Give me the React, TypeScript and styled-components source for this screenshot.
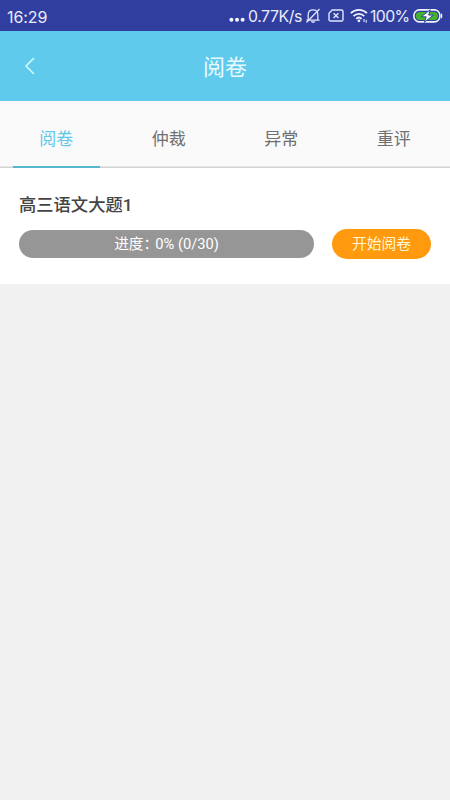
import React from "react";
import styled, { createGlobalStyle } from "styled-components";

const GlobalStyle = createGlobalStyle`
  * { box-sizing: border-box; }
  body { margin: 0; background: #f1f1f1; }
`;

const Screen = styled.div`
  display: flex;
  flex-direction: column;
  width: 100%;
  max-width: 450px;
  height: 800px;
  background: #f1f1f1;
  font-family: Roboto, "Noto Sans CJK SC", sans-serif;
`;

const StatusBar = styled.div`
  display: flex;
  align-items: center;
  height: 31px;
  padding: 2px 7px 0;
  background: #303f9f;
  color: #e9ecfb;
  font: 400 15.8px/24px Inter, sans-serif;
`;

const Clock = styled.span`
  flex: 1;
  font-size: 16px;
  letter-spacing: -0.1px;
`;

const StatusText = styled.span<{ $width: number; $spacing: number }>`
  width: ${(p) => p.$width}px;
  white-space: nowrap;
  letter-spacing: ${(p) => p.$spacing}px;
`;

const StatusIcon = styled.svg<{ $gap?: number }>`
  flex: none;
  display: block;
  margin-right: ${(p) => p.$gap ?? 0}px;
  margin-bottom: 2px;
`;

const Header = styled.header`
  display: grid;
  grid-template-columns: 60px 1fr 60px;
  align-items: center;
  height: 70px;
  background: #60caed;
  color: #e9faff;
`;

const BackButton = styled.button`
  display: flex;
  justify-content: center;
  padding: 0;
  border: 0;
  background: none;
  color: #d3fbff;
`;

const Title = styled.h1`
  margin: 0;
  padding-top: 4px;
  font-size: 22px;
  line-height: 32px;
  font-weight: 400;
  text-align: center;
`;

const Tabs = styled.nav`
  display: grid;
  grid-template-columns: repeat(4, 1fr);
  height: 67px;
  padding-top: 1px;
  background: #fafafa;
  box-shadow: inset 0 -1px #d3d3d3, inset 0 -2px #e5e5e5;
`;

const Tab = styled.button<{ $active?: boolean }>`
  margin: 0 12.5px;
  padding: 9px 0 0;
  border: 0;
  border-bottom: 2px solid ${(p) => (p.$active ? "#55b6cc" : "transparent")};
  background: none;
  color: ${(p) => (p.$active ? "#62c8ea" : "#707070")};
  font: inherit;
  font-size: 17px;
  line-height: 26px;
`;

const Task = styled.section`
  height: 116px;
  padding: 24px 19px 0 19px;
  background: #fff;
`;

const TaskTitle = styled.h2`
  margin: 0;
  color: #444;
  font-size: 17.3px;
  line-height: 26px;
  font-weight: 500;
`;

const TaskRow = styled.div`
  display: flex;
  align-items: center;
  justify-content: space-between;
  margin-top: 11px;
`;

const Progress = styled.div`
  width: 295px;
  height: 28px;
  border-radius: 14px;
  background: #969696;
  color: #fff;
  font-size: 14.7px;
  line-height: 29px;
  text-align: center;
`;

const Colon = styled.span`
  letter-spacing: -3px;
`;

const StartButton = styled.button`
  width: 99px;
  height: 30px;
  padding: 1px 0 0;
  border: 0;
  border-radius: 15px;
  background: #ff9a0e;
  color: #fff4d6;
  font: inherit;
  font-size: 14.8px;
  line-height: 29px;
`;

const tabs = ["阅卷", "仲裁", "异常", "重评"];

export default function App() {
  return (
    <>
      <GlobalStyle />
      <Screen>
        <StatusBar>
          <Clock>16:29</Clock>
          <StatusIcon width="16" height="12" viewBox="0 0 16 12" fill="#f4f6ff" $gap={3}>
            <circle cx="2.4" cy="9.8" r="2" />
            <circle cx="8" cy="9.8" r="2" />
            <circle cx="13.6" cy="9.8" r="2" />
          </StatusIcon>
          <StatusText $width={57} $spacing={-0.4}>0.77K/s</StatusText>
          <StatusIcon width="16" height="16" viewBox="0 0 16 16" fill="none" stroke="#e1e5f8" strokeWidth="1.3" $gap={7}>
            <path d="M1.5 12.2h13M3.2 12V6.5C3.2 3.6 5 1.8 8 1.8s4.8 1.8 4.8 4.7V12M1.5 14.5 14.5 1" />
            <path d="M5.8 13h4.6c-.3 1.4-1.1 2-2.3 2s-2-.6-2.3-2z" fill="#b5bbea" stroke="none" />
          </StatusIcon>
          <StatusIcon width="16" height="13" viewBox="0 0 16 13" fill="none" stroke="#e1e5f8" strokeWidth="1.4" $gap={6}>
            <path d="M4.2 1h9.2c1 0 1.6.6 1.6 1.6v7.8c0 1-.6 1.6-1.6 1.6H2.6C1.6 12 1 11.4 1 10.4V4.2z" />
            <path d="m5.6 4.2 4.8 4.8m0-4.8L5.6 9" />
          </StatusIcon>
          <StatusIcon width="19" height="15" viewBox="0 0 19 15" fill="none" stroke="#f1f3ff" strokeWidth="1.8" $gap={1}>
            <path d="M.8 5.2c4.6-4.5 11.6-4.5 16.2 0M3.5 8.1c3.1-3 7.7-3 10.8 0M6.2 10.8c1.6-1.5 3.8-1.5 5.4 0" />
            <circle cx="8.9" cy="12.8" r="1.4" fill="#f1f3ff" stroke="none" />
            <path d="M14 11v3M16.2 11.8v3" strokeWidth="1" />
          </StatusIcon>
          <StatusText $width={43} $spacing={-0.6}>100%</StatusText>
          <StatusIcon width="30" height="14" viewBox="0 0 30 14">
            <rect x=".9" y=".9" width="26" height="12" rx="5.5" fill="#303f9f" stroke="#f1f3ff" strokeWidth="1.6" />
            <rect x="2.9" y="2.9" width="22" height="8" rx="3.6" fill="#43b32d" />
            <path d="M28 4.2c1.8.7 1.8 4.7 0 5.4z" fill="#f1f3ff" />
            <path d="m17.2.8-9 7h5L11.4 13.3l9-7.2H15.7z" fill="#fff" stroke="#34469b" strokeWidth="1" />
          </StatusIcon>
        </StatusBar>
        <Header>
          <BackButton aria-label="返回">
            <svg width="12" height="18" viewBox="0 0 12 18" fill="none" stroke="currentColor" strokeWidth="1.5">
              <path d="M10 1 2 9l8 8" />
            </svg>
          </BackButton>
          <Title>阅卷</Title>
        </Header>
        <Tabs>
          {tabs.map((label, i) => (
            <Tab key={label} $active={i === 0}>{label}</Tab>
          ))}
        </Tabs>
        <Task>
          <TaskTitle>高三语文大题1</TaskTitle>
          <TaskRow>
            <Progress>进度<Colon>：</Colon>0% (0/30)</Progress>
            <StartButton>开始阅卷</StartButton>
          </TaskRow>
        </Task>
      </Screen>
    </>
  );
}
